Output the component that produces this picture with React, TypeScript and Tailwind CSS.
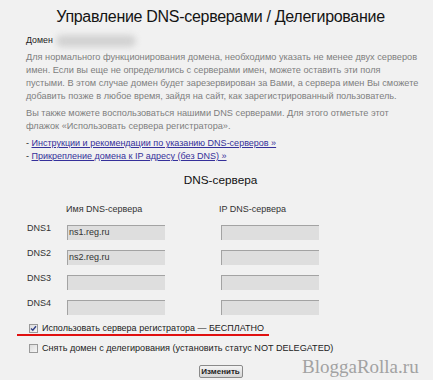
import { useState } from 'react';

const rows = [
  { label: 'DNS1', name: 'ns1.reg.ru' },
  { label: 'DNS2', name: 'ns2.reg.ru' },
  { label: 'DNS3', name: '' },
  { label: 'DNS4', name: '' },
];

function Box({ checked, onClick }: { checked: boolean; onClick: () => void }) {
  return (
    <span
      onClick={onClick}
      className="ml-[3px] flex h-[9px] w-[9px] shrink-0 items-center justify-center border border-[#9a9a9a] bg-gradient-to-br from-[#dcdcdc] to-[#f6f6f6] cursor-pointer"
    >
      {checked && (
        <svg width="7" height="7" viewBox="0 0 7 7">
          <path d="M1 3.5 L2.8 5.3 L6 1.2" fill="none" stroke="#2f3f86" strokeWidth="1.4" />
        </svg>
      )}
    </span>
  );
}

export default function App() {
  const [useReg, setUseReg] = useState(true);
  const [undelegate, setUndelegate] = useState(false);

  return (
    <div
      className="relative h-[380px] w-[433px] overflow-hidden bg-[#f1f1f1] text-[9px] leading-[13px] text-[#333]"
      style={{ fontFamily: "'Liberation Sans', Arial, sans-serif" }}
    >
      <div className="ml-[26px] w-[389px] pt-[6px] whitespace-nowrap">
        {/* Title */}
        <h1 className="text-center text-[16px] leading-[22px] tracking-[-0.3px] text-[#141414]">
          Управление DNS-серверами / Делегирование
        </h1>

        {/* Domain */}
        <div className="mt-[6px] flex h-[13px] items-center gap-[3px] text-[8.8px] text-[#222]">
          <span>Домен</span>
          <span className="h-[12px] w-[80px] rounded-full bg-[#d2d2d2] blur-[3px]" />
        </div>

        <p className="mt-[4px] text-[9.2px] text-[#7e7e7e]">
          Для нормального функционирования домена, необходимо указать не менее двух серверов
          <br />
          имен. Если вы еще не определились с серверами имен, можете оставить эти поля
          <br />
          пустыми. В этом случае домен будет зарезервирован за Вами, а сервера имен Вы сможете
          <br />
          добавить позже в любое время, зайдя на сайт, как зарегистрированный пользователь.
        </p>

        <p className="mt-[4px] text-[9.2px] text-[#7e7e7e]">
          Вы также можете воспользоваться нашими DNS серверами. Для этого отметьте этот
          <br />
          флажок «Использовать сервера регистратора».
        </p>

        <div className="mt-[4px] text-[#222]">
          <div>
            - <a href="#" className="text-[#35309a] underline">Инструкции и рекомендации по указанию DNS-серверов »</a>
          </div>
          <div>
            - <a href="#" className="text-[#35309a] underline">Прикрепление домена к IP адресу (без DNS) »</a>
          </div>
        </div>

        <h2 className="mt-[9px] text-center text-[11.8px] leading-[16px] text-[#111]">DNS-сервера</h2>

        {/* Table */}
        <div className="mt-[15px] grid grid-cols-[41px_154px_1fr] text-[#333]">
          <span />
          <span className="-ml-[1px]">Имя DNS-сервера</span>
          <span className="-ml-[2px]">IP DNS-сервера</span>
        </div>

        <div className="mt-[9px] flex flex-col gap-[11px]">
          {rows.map((r) => (
            <div key={r.label} className="grid h-[14px] grid-cols-[41px_154px_1fr] items-start">
              <span className="ml-[1px] -mt-[3px] text-[#333]">{r.label}</span>
              <div className="h-[15px] w-[98px] border-l border-t border-[#a3a3a3] border-b-[#ececec] border-r-[#ececec] bg-[#dedede] pl-[1px] text-[9px] leading-[13px] text-[#333]">
                {r.name}
              </div>
              <div className="h-[15px] w-[98px] border-l border-t border-[#a3a3a3] border-b-[#ececec] border-r-[#ececec] bg-[#dedede]" />
            </div>
          ))}
        </div>

        {/* Options */}
        <div className="relative mt-[8px] flex items-center gap-[4px] text-[#222]">
          <Box checked={useReg} onClick={() => setUseReg(!useReg)} />
          <span>Использовать сервера регистратора — БЕСПЛАТНО</span>
          <span className="absolute -left-[9px] top-[12px] h-[2px] w-[252px] bg-[#e01010]" />
        </div>

        <div className="mt-[7px] flex items-center gap-[4px] text-[#222]">
          <Box checked={undelegate} onClick={() => setUndelegate(!undelegate)} />
          <span className="text-[9.1px]">Снять домен с делегирования (установить статус NOT DELEGATED)</span>
        </div>

        <div className="mt-[10px] flex justify-center">
          <button className="flex h-[13px] w-[44px] items-center justify-center rounded-[2px] border border-[#8a8a8a] bg-gradient-to-b from-[#f4f4f4] to-[#d6d6d6] text-[8px] font-bold leading-none text-[#222]">
            Изменить
          </button>
        </div>
      </div>

      {/* Watermark */}
      <span
        className="absolute left-[302px] top-[356px] text-[19px] leading-[22px] text-[#a2a2a2]"
        style={{ fontFamily: "'Liberation Serif', 'Times New Roman', serif" }}
      >
        BloggaRolla.ru
      </span>
    </div>
  );
}
